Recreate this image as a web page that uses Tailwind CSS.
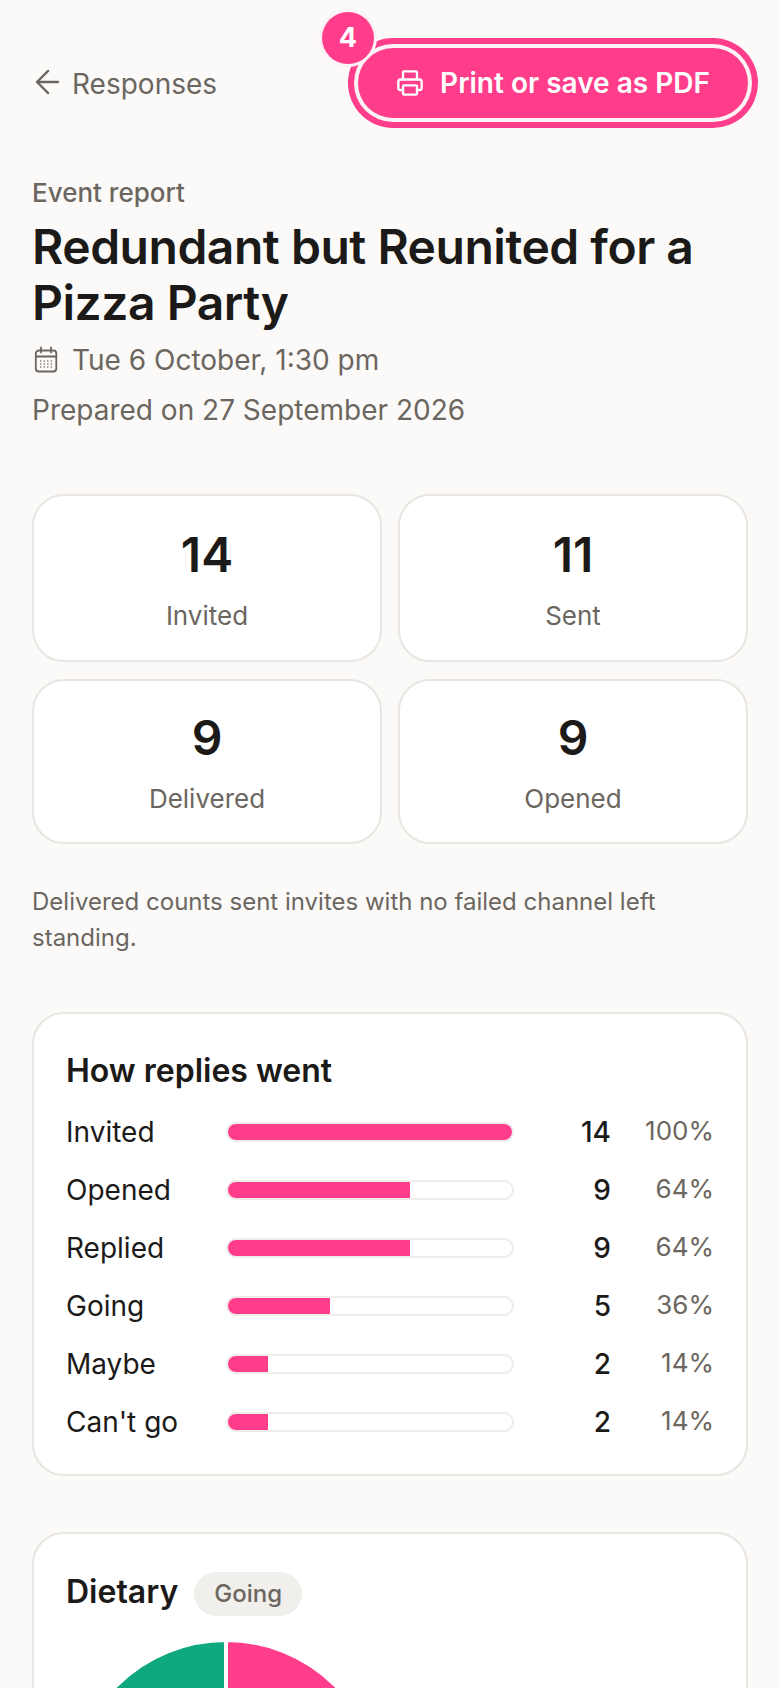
<!DOCTYPE html>
<html lang="en">
<head>
    <meta charset="UTF-8">
    <meta name="viewport" content="width=device-width, initial-scale=1.0">
    <title>Event report</title>
    <script src="https://cdn.jsdelivr.net/npm/@tailwindcss/browser@4"></script>
</head>
<body>
    <div class="h-[1688px] overflow-hidden bg-[#fbfaf8] px-8 font-['Inter',sans-serif] text-[#1c1a18]">

        <!-- top bar -->
        <div class="flex items-start justify-between pt-12 pr-0">
            <a class="flex h-[70px] items-center gap-3 pt-[2px] text-[28px] text-[#6b6660]">
                <svg class="mb-1 size-[28px]" viewBox="0 0 24 24" fill="none" stroke="currentColor" stroke-width="2" stroke-linecap="round" stroke-linejoin="round"><path d="M13.8 2.5 4.3 12l9.5 9.5M4.3 12h18"/></svg>
                Responses
            </a>
            <div class="relative">
                <button class="flex h-[70px] w-[390px] items-center justify-center gap-[16px] rounded-full bg-[#ff3d8b] text-[28px] font-semibold text-white shadow-[0_0_0_4px_#fdf3f7,0_0_0_10px_#ff3d8b]">
                    <svg class="size-7" viewBox="0 0 24 24" fill="none" stroke="currentColor" stroke-width="2" stroke-linecap="round" stroke-linejoin="round"><path d="M6 18H4a2 2 0 0 1-2-2v-5a2 2 0 0 1 2-2h16a2 2 0 0 1 2 2v5a2 2 0 0 1-2 2h-2"/><path d="M6 9V3a1 1 0 0 1 1-1h10a1 1 0 0 1 1 1v6"/><rect x="6" y="14" width="12" height="8" rx="1"/></svg>
                    Print or save as PDF
                </button>
                <span class="absolute -left-[36px] -top-9 flex size-[52px] items-center justify-center rounded-full bg-[#ff3d8b] text-[27px] font-bold text-white shadow-[0_0_0_3px_#fdf3f7]">4</span>
            </div>
        </div>

        <!-- title -->
        <div class="mt-[57px]">
            <p class="text-[26px] font-medium leading-9 text-[#6b6660]">Event report</p>
            <h1 class="mt-[8px] text-[48px] font-semibold leading-[56px] tracking-[-0.01em]">Redundant but Reunited for a Pizza Party</h1>
            <div class="mt-[4px] flex h-[50px] items-center gap-3 text-[28px] text-[#6b6660]">
                <svg class="size-7" viewBox="0 0 28 28" fill="none" stroke="currentColor" stroke-width="1.8" stroke-linecap="round" stroke-linejoin="round">
                    <rect x="3.8" y="4.5" width="20.5" height="21" rx="3"/>
                    <path d="M3.8 10.5h20.5M9 1.5v5M19 1.5v5"/>
                    <path stroke-width="1.5" d="M8.7 15h.01M12.2 15h.01M15.8 15h.01M19.3 15h.01M8.7 18h.01M12.2 18h.01M15.8 18h.01M19.3 18h.01M8.7 21h.01M12.2 21h.01M15.8 21h.01M19.3 21h.01"/>
                </svg>
                Tue 6 October, 1:30 pm
            </div>
            <p class="mt-[2px] text-[28px] leading-[46px] text-[#6b6660]">Prepared on 27 September 2026</p>
        </div>

        <!-- stat cards -->
        <div class="mt-[61px] grid grid-cols-2 gap-x-4 gap-y-[17px]">
            <div class="flex h-[168px] flex-col items-center justify-center rounded-[32px] border-2 border-[#e9e6e2] bg-white pt-0.5">
                <div class="text-[48px] font-semibold leading-[60px]">14</div>
                <div class="mt-[13px] text-[26px] leading-9 text-[#6b6660]">Invited</div>
            </div>
            <div class="flex h-[168px] flex-col items-center justify-center rounded-[32px] border-2 border-[#e9e6e2] bg-white pt-0.5">
                <div class="text-[48px] font-semibold leading-[60px]">11</div>
                <div class="mt-[13px] text-[26px] leading-9 text-[#6b6660]">Sent</div>
            </div>
            <div class="flex h-[165px] flex-col items-center justify-center rounded-[32px] border-2 border-[#e9e6e2] bg-white pt-0.5">
                <div class="text-[48px] font-semibold leading-[60px]">9</div>
                <div class="mt-[13px] text-[26px] leading-9 text-[#6b6660]">Delivered</div>
            </div>
            <div class="flex h-[165px] flex-col items-center justify-center rounded-[32px] border-2 border-[#e9e6e2] bg-white pt-0.5">
                <div class="text-[48px] font-semibold leading-[60px]">9</div>
                <div class="mt-[13px] text-[26px] leading-9 text-[#6b6660]">Opened</div>
            </div>
        </div>

        <p class="mt-[40px] text-[24px] leading-9 text-[#6b6660]">Delivered counts sent invites with no failed channel left standing.</p>

        <!-- funnel -->
        <div class="mt-[56px] rounded-[32px] border-2 border-[#e9e6e2] bg-white pl-8 pr-8 pt-[37px] pb-[23px]">
            <h2 class="text-[32px] font-semibold leading-10">How replies went</h2>
            <div class="mt-[12px]">
                <div class="grid h-[58px] grid-cols-[160px_288px_1fr_103px] items-center">
                    <span class="text-[28px]">Invited</span>
                    <div class="h-5 overflow-hidden rounded-full border-2 border-[#eeebe8] bg-white"><div class="h-full w-full bg-[#ff3d8b]"></div></div>
                    <span class="text-right text-[28px] font-medium">14</span>
                    <span class="pb-1 text-right text-[26px] text-[#6b6660]">100%</span>
                </div>
                <div class="grid h-[58px] grid-cols-[160px_288px_1fr_103px] items-center">
                    <span class="text-[28px]">Opened</span>
                    <div class="h-5 overflow-hidden rounded-full border-2 border-[#eeebe8] bg-white"><div class="h-full w-[64%] bg-[#ff3d8b]"></div></div>
                    <span class="text-right text-[28px] font-medium">9</span>
                    <span class="pb-1 text-right text-[26px] text-[#6b6660]">64%</span>
                </div>
                <div class="grid h-[58px] grid-cols-[160px_288px_1fr_103px] items-center">
                    <span class="text-[28px]">Replied</span>
                    <div class="h-5 overflow-hidden rounded-full border-2 border-[#eeebe8] bg-white"><div class="h-full w-[64%] bg-[#ff3d8b]"></div></div>
                    <span class="text-right text-[28px] font-medium">9</span>
                    <span class="pb-1 text-right text-[26px] text-[#6b6660]">64%</span>
                </div>
                <div class="grid h-[58px] grid-cols-[160px_288px_1fr_103px] items-center">
                    <span class="text-[28px]">Going</span>
                    <div class="h-5 overflow-hidden rounded-full border-2 border-[#eeebe8] bg-white"><div class="h-full w-[36%] bg-[#ff3d8b]"></div></div>
                    <span class="text-right text-[28px] font-medium">5</span>
                    <span class="pb-1 text-right text-[26px] text-[#6b6660]">36%</span>
                </div>
                <div class="grid h-[58px] grid-cols-[160px_288px_1fr_103px] items-center">
                    <span class="text-[28px]">Maybe</span>
                    <div class="h-5 overflow-hidden rounded-full border-2 border-[#eeebe8] bg-white"><div class="h-full w-[14%] bg-[#ff3d8b]"></div></div>
                    <span class="text-right text-[28px] font-medium">2</span>
                    <span class="pb-1 text-right text-[26px] text-[#6b6660]">14%</span>
                </div>
                <div class="grid h-[58px] grid-cols-[160px_288px_1fr_103px] items-center">
                    <span class="text-[28px]">Can't go</span>
                    <div class="h-5 overflow-hidden rounded-full border-2 border-[#eeebe8] bg-white"><div class="h-full w-[14%] bg-[#ff3d8b]"></div></div>
                    <span class="text-right text-[28px] font-medium">2</span>
                    <span class="pb-1 text-right text-[26px] text-[#6b6660]">14%</span>
                </div>
            </div>
        </div>

        <!-- dietary -->
        <div class="mt-[56px] rounded-[32px] border-2 border-[#e9e6e2] bg-white px-8 pt-[34px] pb-8">
            <div class="flex items-center gap-4">
                <h2 class="text-[32px] font-semibold leading-10">Dietary</h2>
                <span class="mt-[4px] flex h-11 items-center rounded-full bg-[#f1efec] px-5 text-[24px] font-medium text-[#6b6660]">Going</span>
            </div>
            <svg class="mt-[19px]" width="320" height="320" viewBox="-160 -160 320 320">
                <path d="M0 0L0 -155A155 155 0 0 1 155 0Z" fill="#ff3d8b" stroke="#fff" stroke-width="4"/>
                <path d="M0 0L-155 0A155 155 0 0 1 0 -155Z" fill="#10a97f" stroke="#fff" stroke-width="4"/>
            </svg>
        </div>
    </div>
</body>
</html>
